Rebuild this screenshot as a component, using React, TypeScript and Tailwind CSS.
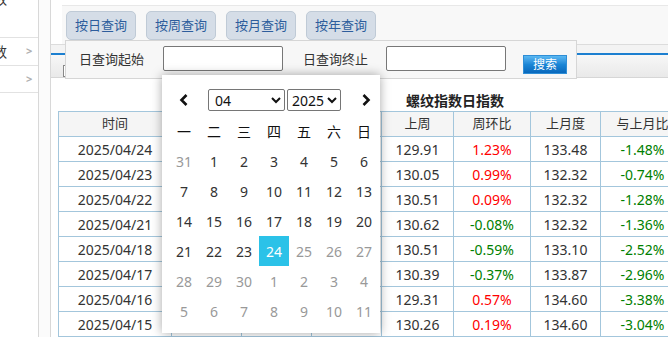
import React from 'react';

const font = { fontFamily: '"Noto Sans", "Noto Sans CJK SC", sans-serif' };

interface Row {
  date: string;
  today: string;
  yday: string;
  dayPct: string;
  week: string;
  weekPct: string;
  month: string;
  monthPct: string;
}

const rows: Row[] = [
  { date: '2025/04/24', today: '131.51', yday: '130.70', dayPct: '0.62%', week: '129.91', weekPct: '1.23%', month: '133.48', monthPct: '-1.48%' },
  { date: '2025/04/23', today: '131.34', yday: '131.51', dayPct: '-0.13%', week: '130.05', weekPct: '0.99%', month: '132.32', monthPct: '-0.74%' },
  { date: '2025/04/22', today: '130.63', yday: '131.34', dayPct: '-0.54%', week: '130.51', weekPct: '0.09%', month: '132.32', monthPct: '-1.28%' },
  { date: '2025/04/21', today: '130.52', yday: '130.63', dayPct: '-0.08%', week: '130.62', weekPct: '-0.08%', month: '132.32', monthPct: '-1.36%' },
  { date: '2025/04/18', today: '129.74', yday: '130.52', dayPct: '-0.60%', week: '130.51', weekPct: '-0.59%', month: '133.10', monthPct: '-2.52%' },
  { date: '2025/04/17', today: '129.91', yday: '130.26', dayPct: '-0.27%', week: '130.39', weekPct: '-0.37%', month: '133.87', monthPct: '-2.96%' },
  { date: '2025/04/16', today: '130.05', yday: '130.26', dayPct: '-0.16%', week: '129.31', weekPct: '0.57%', month: '134.60', monthPct: '-3.38%' },
  { date: '2025/04/15', today: '130.51', yday: '130.62', dayPct: '-0.08%', week: '130.26', weekPct: '0.19%', month: '134.60', monthPct: '-3.04%' },
];

const pctColor = (v: string) => (v.startsWith('-') ? 'text-[#008000]' : 'text-[#ff0000]');

const weeks = [
  [31, 1, 2, 3, 4, 5, 6],
  [7, 8, 9, 10, 11, 12, 13],
  [14, 15, 16, 17, 18, 19, 20],
  [21, 22, 23, 24, 25, 26, 27],
  [28, 29, 30, 1, 2, 3, 4],
  [5, 6, 7, 8, 9, 10, 11],
];

const Chevron = ({ dir }: { dir: 'left' | 'right' }) => (
  <svg width="10" height="14" viewBox="0 0 10 14">
    <path
      d={dir === 'left' ? 'M7.5 2 L2.5 7 L7.5 12' : 'M2.5 2 L7.5 7 L2.5 12'}
      stroke="#111"
      strokeWidth="2.6"
      fill="none"
    />
  </svg>
);

const Sidebar = () => (
  <div className="w-[39px] shrink-0 border-r border-[#d8d8d8] bg-white text-[14px] text-[#333] overflow-hidden">
    <div className="h-[38px] border-b border-[#e2e2e2] relative">
      <span className="absolute -left-[21px] -top-[12px]">指数</span>
    </div>
    <div className="h-[28px] border-b border-[#e2e2e2] flex items-center relative">
      <span className="absolute -left-[21px]">指数</span>
      <span className="absolute left-[26px] text-[11px] font-bold text-[#b0b0b0]">&gt;</span>
    </div>
    <div className="h-[27px] border-b border-[#e2e2e2] flex items-center relative">
      <span className="absolute left-[26px] text-[11px] font-bold text-[#b0b0b0]">&gt;</span>
    </div>
  </div>
);

const Toolbar = () => (
  <div className="h-[45px] bg-white pt-[5px] border-b border-[#dcdcdc]">
    <div className="ml-[11px] h-[39px] bg-[#f8f8f8] border-t border-[#e8e8e8] flex gap-[10px] pl-[4px] pt-[5px]">
      {['按日查询', '按周查询', '按月查询', '按年查询'].map((t) => (
        <button
          key={t}
          className="w-[70px] h-[29px] rounded-[5px] bg-[#d5dde7] border border-[#bfcad6] text-[13px] text-[#2d5d9c]"
        >
          {t}
        </button>
      ))}
    </div>
  </div>
);

const TabBar = () => (
  <div className="h-[40px] border-b border-[#d6d6d6] flex flex-col">
    <div className="h-[8px] bg-[#f3f3f3]" />
    <div className="h-[2px] bg-[#1c7fd0]" />
    <div className="flex-1 bg-gradient-to-b from-[#f7f7f7] to-[#e9e9e9] pl-[12px] pt-[10px]">
      <div className="w-[60px] h-[12px] bg-white border border-[#888]" />
    </div>
  </div>
);

const DataTable = () => {
  const head = ['时间', '今日', '昨日', '日环比', '上周', '周环比', '上月度', '与上月比', '上年度', '与上年比'];
  const widths = ['w-[113px]', 'w-[70px]', 'w-[70px]', 'w-[70px]', 'w-[72px]', 'w-[77px]', 'w-[70px]', 'w-[84px]', 'w-[80px]', 'w-[88px]'];
  return (
    <table className="border-collapse w-[794px] text-[14px] text-[#333] table-fixed">
      <thead>
        <tr className="h-[25px] bg-[#f5f5f5]">
          {head.map((h, i) => (
            <th key={h} className={`${widths[i]} border border-[#a3c6dc] font-normal text-[13px]`}>
              {h}
            </th>
          ))}
        </tr>
      </thead>
      <tbody>
        {rows.map((r) => (
          <tr key={r.date} className="h-[25px] text-center">
            <td className="border border-[#a3c6dc]">{r.date}</td>
            <td className="border border-[#a3c6dc]">{r.today}</td>
            <td className="border border-[#a3c6dc]">{r.yday}</td>
            <td className={`border border-[#a3c6dc] ${pctColor(r.dayPct)}`}>{r.dayPct}</td>
            <td className="border border-[#a3c6dc]">{r.week}</td>
            <td className={`border border-[#a3c6dc] ${pctColor(r.weekPct)}`}>{r.weekPct}</td>
            <td className="border border-[#a3c6dc]">{r.month}</td>
            <td className={`border border-[#a3c6dc] ${pctColor(r.monthPct)}`}>{r.monthPct}</td>
            <td className="border border-[#a3c6dc]">130.60</td>
            <td className="border border-[#a3c6dc] text-[#008000]">-1.20%</td>
          </tr>
        ))}
      </tbody>
    </table>
  );
};

const FilterPanel = () => (
  <div className="absolute left-[65px] top-[40px] w-[512px] h-[39px] bg-[#f7f7f7] border border-[#d6d6d6] flex items-center text-[13px] text-[#333]">
    <span className="ml-[13px] w-[84px]">日查询起始</span>
    <div className="w-[120px] h-[25px] bg-white border border-[#777] rounded-[2px] -mt-[2px]" />
    <span className="ml-[20px] w-[83px]">日查询终止</span>
    <div className="w-[120px] h-[25px] bg-white border border-[#777] rounded-[2px] -mt-[2px]" />
    <button className="ml-[17px] mt-[10px] w-[44px] h-[19px] bg-gradient-to-b from-[#5ab8f2] via-[#1a86d6] to-[#0868bc] border border-[#2f8ed6] text-white text-[12px] leading-none">
      搜索
    </button>
  </div>
);

const Calendar = () => (
  <div className="absolute left-[162px] top-[75px] w-[218px] h-[258px] bg-white shadow-[0_0_10px_rgba(0,0,0,0.35)] pl-[7px] pt-[14px]">
    <div className="flex items-center h-[22px] w-[210px]">
      <div className="w-[30px] flex justify-center">
        <Chevron dir="left" />
      </div>
      <select
        defaultValue="04"
        className="ml-[9px] w-[77px] h-[22px] border border-[#767676] rounded-[2px] text-[14px] text-[#111] bg-white pl-[2px]"
      >
        {['01', '02', '03', '04', '05', '06', '07', '08', '09', '10', '11', '12'].map((m) => (
          <option key={m}>{m}</option>
        ))}
      </select>
      <select
        defaultValue="2025"
        className="ml-[2px] w-[54px] h-[22px] border border-[#767676] rounded-[2px] text-[14px] text-[#111] bg-white"
      >
        {['2023', '2024', '2025'].map((y) => (
          <option key={y}>{y}</option>
        ))}
      </select>
      <div className="flex-1 flex justify-end pr-[8px]">
        <Chevron dir="right" />
      </div>
    </div>
    <div className="grid grid-cols-[repeat(7,30px)] mt-[5px] text-[14px] text-[#222]">
      {['一', '二', '三', '四', '五', '六', '日'].map((d) => (
        <div key={d} className="h-[30px] flex items-center justify-center text-[#111]">
          {d}
        </div>
      ))}
      {weeks.map((w, wi) =>
        w.map((d, di) => {
          const other = (wi === 0 && d > 7) || wi >= 4;
          const future = wi === 3 && d > 24;
          const sel = wi === 3 && d === 24;
          let cls = 'text-[#333]';
          if (other || future) cls = 'text-[#999]';
          if (sel) cls = 'bg-[#2bc2e8] text-white';
          return (
            <div key={`${wi}-${di}`} className={`h-[30px] flex items-center justify-center ${cls}`}>
              {d}
            </div>
          );
        })
      )}
    </div>
  </div>
);

export default function App() {
  return (
    <div className="relative w-[668px] h-[337px] overflow-hidden bg-white flex" style={font}>
      <Sidebar />
      <div className="w-[11px] shrink-0 bg-[#fbfbfb]" />
      <div className="flex-1 min-w-0 border-l border-[#d8d8d8] flex flex-col">
        <Toolbar />
        <TabBar />
        <div className="bg-white pl-[7px] pt-[14px]">
          <div className="w-[794px] text-center text-[14px] font-bold text-[#222] h-[18px] leading-[18px] mb-[1px]">
            螺纹指数日指数
          </div>
          <DataTable />
        </div>
      </div>
      <FilterPanel />
      <Calendar />
    </div>
  );
}
